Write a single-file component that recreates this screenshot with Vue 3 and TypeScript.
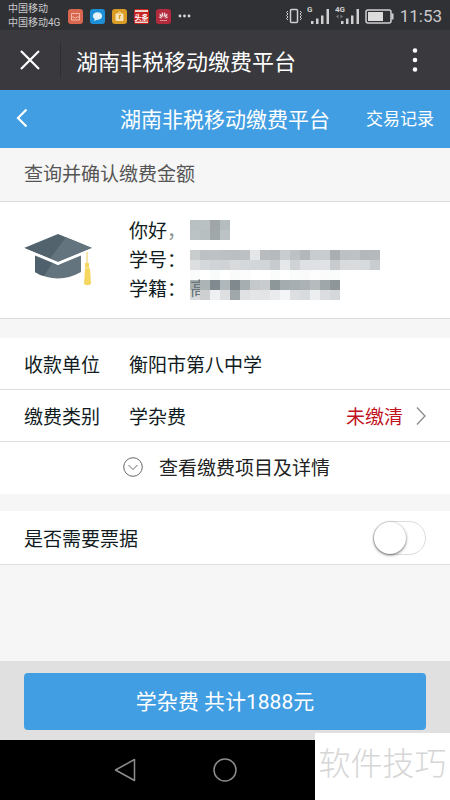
<script setup lang="ts">
import { ref } from 'vue'

interface Cell {
  x: number
  y: number
  fill: string
}

const needReceipt = ref(false)

// Privacy mosaic: one string of grey levels per line of 10px blocks.
const mosaicRows: { y: number; levels: string[] }[] = [
  { y: 0, levels: ['b9c0c2', 'bac1c3', 'a0a6a8', 'b6bdbf'] },
  { y: 10, levels: ['bcc3c5', 'b8bfc1', 'a0a8aa', 'bdc3c4'] },
  { y: 30, levels: ['c8cccd', 'bdc1c3', 'bec2c4', 'bcc0c2', 'bbbfc1', 'bdc1c3', 'e4e6e8', 'b8bcbe', 'b6babc', 'c9cdcf', 'bdc1c3', 'b3b7ba', 'c8ccce', 'c8ccce', 'a9aeb1', 'bdc1c3', 'bec2c4', 'b4b8ba', 'b5b9bb'] },
  { y: 40, levels: ['dcdee0', 'd5d8da', 'd1d4d6', 'd0d3d5', 'd8dadc', 'd5d8da', 'd3d6d8', 'd2d5d7', 'c7cbcd', 'e5e7e9', 'd0d3d5', 'dee0e3', 'dee0e3', 'e0e2e5', 'c7cbcd', 'd8dadc', 'd9dbdd', 'd7dadc', 'c9cdcf'] },
  { y: 50, levels: ['fafbfb', 'ffffff', 'f9fafa', 'ffffff', 'f9fafa', 'fcfcfc', 'ffffff', 'ffffff', 'fafbfb', 'ffffff', 'fafbfb', 'fafafb', 'fdfdfd', 'fbfbfb', 'fafbfb'] },
  { y: 60, levels: ['a9b0b2', 'adb4b6', '818a8f', 'b1b8bb', '7f898e', 'a7aeb1', 'c5c9cb', 'c8ccce', '8d9699', 'a5acaf', 'a7aeb1', 'abb1b4', 'b6bbbd', 'a0a7aa', '8e969a'] },
  { y: 70, levels: ['d8dadb', 'cdcfd1', 'eff0f1', 'dddfe1', 'a0a7aa', 'dfe1e3', 'e3e5e6', 'e2e4e5', 'eaebec', 'f4f5f6', 'dcdee0', 'd8dbdd', 'edeef0', 'dbdde0', 'd5d8da'] },
]

const cells: Cell[] = mosaicRows.flatMap((row) =>
  row.levels.map((level, i) => ({ x: i * 10, y: row.y, fill: `#${level}` })),
)
</script>

<template>
  <div class="screen">
    <div class="status">
      <div class="carriers">
        <span>中国移动</span>
        <span>中国移动4G</span>
      </div>
      <div class="apps">
        <svg class="app" viewBox="0 0 15 15" aria-hidden="true">
          <rect width="15" height="15" rx="3" fill="#d9674f" />
          <path d="M3.5 4.5h8v6.500h-8zM3.500 8h2.200q1.800 2.200 3.600 0h2.200" fill="none" stroke="#f3b7a6" />
        </svg>
        <svg class="app" viewBox="0 0 15 15" aria-hidden="true">
          <rect width="15" height="15" rx="3" fill="#1d8fd6" />
          <ellipse cx="7.500" cy="7" rx="4.600" ry="3.800" fill="#e3f1fa" />
          <path d="M5 9.500l-1 2.500 4-1.500z" fill="#e3f1fa" />
        </svg>
        <svg class="app" viewBox="0 0 15 15" aria-hidden="true">
          <rect width="15" height="15" rx="3" fill="#d99c25" />
          <rect x="3.500" y="4.500" width="8" height="7.500" rx="1" fill="#f6e3b6" />
          <path d="M5.500 4.500q2-3 4 0" fill="none" stroke="#f6e3b6" />
          <path d="M7.500 6v4M7.500 6.500h1.500" stroke="#d99c25" stroke-width="1.200" />
        </svg>
        <svg class="app" viewBox="0 0 15 15" aria-hidden="true">
          <rect width="15" height="15" rx="2" fill="#c9231f" />
          <path d="M1 1h13v2H1zM1 12.500h13v1.500H1z" fill="#ecd9d3" />
          <text x="7.500" y="10.500" text-anchor="middle" class="app-text">头条</text>
        </svg>
        <svg class="app" viewBox="0 0 15 15" aria-hidden="true">
          <rect width="15" height="15" rx="3" fill="#b32b3c" />
          <path d="M7.200 8.500Q4.500 5 6.300 3q1.300 1.500.9 5.500zM7.800 8.500q2.700-3.500.9-5.500-1.300 1.500-.9 5.500zM6.500 8.800Q3 7.500 3.600 4.500 6 5.500 6.500 8.800zM8.500 8.800Q12 7.500 11.400 4.500 9 5.500 8.500 8.800zM6 9.500q-2.500.3-3.300-2 2.200 0 3.300 2zM9 9.500q2.500.3 3.300-2-2.200 0-3.300 2z" fill="#f2dfe1" />
          <path d="M4 11.500h7" stroke="#d98b94" />
        </svg>
        <svg class="more" viewBox="0 0 13 4" aria-hidden="true">
          <g fill="#d8d8da"><circle cx="2" cy="2" r="1.400" /><circle cx="6.500" cy="2" r="1.400" /><circle cx="11" cy="2" r="1.400" /></g>
        </svg>
      </div>
      <div class="signals">
        <svg width="18" height="18" viewBox="0 0 18 18" fill="none" stroke="#d0d0d2" aria-hidden="true">
          <rect x="5.500" y="2.500" width="7" height="13" rx="1" stroke-width="1.500" />
          <path d="M3 4L1.500 5.500 3 7 1.500 8.500 3 10l-1.500 1.500L3 13M15 4l1.500 1.500L15 7l1.500 1.500L15 10l1.500 1.500L15 13" />
        </svg>
        <svg width="24" height="22" viewBox="0 0 24 22" fill="#d0d0d2" aria-hidden="true">
          <text x="0" y="7" class="net">G</text>
          <path d="M4 16h2.500v3H4zM9 13.500h2.500V19H9zM14 10.500h2.500V19H14zM19.500 4H22v15h-2.500z" />
        </svg>
        <svg width="26" height="22" viewBox="0 0 26 22" fill="#d0d0d2" aria-hidden="true">
          <text x="0" y="7" class="net">4G</text>
          <path d="M1 11.500l2.500-2v4zM8 11.500l-2.500-2v4z" fill="#77787b" />
          <path d="M6 16h2.500v3H6zM11 13.500h2.500V19H11zM16 10.500h2.500V19H16zM21.500 4H24v15h-2.500z" />
        </svg>
        <svg class="battery" width="29" height="15" viewBox="0 0 29 15" aria-hidden="true">
          <rect x="1" y="1" width="25" height="13" rx="2" fill="none" stroke="#d0d0d2" stroke-width="1.500" />
          <rect x="3" y="3" width="15" height="9" fill="#dcdcdd" />
          <path d="M27.500 4.500v6" stroke="#d0d0d2" stroke-width="2" />
        </svg>
        <span class="clock">11:53</span>
      </div>
    </div>

    <div class="webbar">
      <button class="close" type="button" aria-label="关闭">
        <svg width="22" height="22" viewBox="0 0 22 22" aria-hidden="true">
          <path d="M2 2l18 18M20 2L2 20" stroke="#fff" stroke-width="2.200" />
        </svg>
      </button>
      <div class="webtitle">湖南非税移动缴费平台</div>
      <button class="menu" type="button" aria-label="更多">
        <svg width="6" height="26" viewBox="0 0 6 26" fill="#fff" aria-hidden="true">
          <circle cx="3" cy="3.500" r="2.300" /><circle cx="3" cy="13" r="2.300" /><circle cx="3" cy="22.500" r="2.300" />
        </svg>
      </button>
    </div>

    <header class="header">
      <button class="back" type="button" aria-label="返回">
        <svg width="12" height="20" viewBox="0 0 12 20" aria-hidden="true">
          <path d="M10.500 1.500L2 10l8.500 8.500" fill="none" stroke="#fff" stroke-width="2.200" />
        </svg>
      </button>
      <h1>湖南非税移动缴费平台</h1>
      <a class="records" href="#records">交易记录</a>
    </header>

    <main>
      <h2 class="section">查询并确认缴费金额</h2>

      <section class="card profile">
        <svg class="cap" width="68" height="54" viewBox="0 0 68 54" aria-hidden="true">
          <path d="M11 20v19q23 13 46 0V20L34 32z" fill="#64747e" />
          <path d="M11 20v19q4 3 9 4l9-14z" fill="#4f616c" />
          <path d="M34 1l34 14-34 14L0 15z" fill="#52636e" />
          <path d="M42 4.300L68 15 34 29l-8-3.300z" fill="#64747e" />
          <path d="M34 29L0 15v3l34 14 34-14v-3z" fill="#fff" />
          <path d="M63 19v13" stroke="#f4dc8b" stroke-width="1.500" />
          <path d="M61 30h4v5h1l1 16q-4 2.500-7 0l1-16z" fill="#f5d65f" />
          <path d="M60.500 35h5.500" stroke="#fbedb6" />
        </svg>
        <div class="labels">
          <span>你好<i>，</i></span>
          <span>学号：</span>
          <span>学籍：</span>
        </div>
        <svg class="mosaic" width="190" height="80" viewBox="0 0 190 80" shape-rendering="crispEdges" aria-hidden="true">
          <rect v-for="c in cells" :key="`${c.x}-${c.y}`" :x="c.x" :y="c.y" width="10" height="10" :fill="c.fill" />
          <svg width="10" height="80">
            <text x="0" y="76" class="veiled">高</text>
          </svg>
        </svg>
      </section>

      <section class="card rows">
        <div class="row">
          <span class="name">收款单位</span>
          <span class="value">衡阳市第八中学</span>
        </div>
        <a class="row" href="#category">
          <span class="name">缴费类别</span>
          <span class="value">学杂费</span>
          <span class="unpaid">未缴清</span>
          <svg width="10" height="20" viewBox="0 0 10 20" aria-hidden="true">
            <path d="M1 1.500L9 10l-8 8.500" fill="none" stroke="#8b8b8b" stroke-width="1.300" />
          </svg>
        </a>
        <button class="row details" type="button">
          <svg width="20" height="20" viewBox="0 0 20 20" fill="none" stroke="#666" aria-hidden="true">
            <circle cx="10" cy="10" r="9.300" /><path d="M5.500 8l4.500 4.500L14.500 8" />
          </svg>
          <span>查看缴费项目及详情</span>
        </button>
      </section>

      <section class="card receipt">
        <label for="receipt">是否需要票据</label>
        <input id="receipt" v-model="needReceipt" class="switch" type="checkbox" role="switch" />
      </section>
    </main>

    <footer class="pay">
      <button type="button">学杂费 共计1888元</button>
    </footer>

    <nav class="keys">
      <button type="button" aria-label="后退">
        <svg width="24" height="24" viewBox="0 0 24 24" fill="none" stroke="#8c8c8c" stroke-width="1.500" stroke-linejoin="round" aria-hidden="true">
          <path d="M21.500 1.500v21L2.500 12z" />
        </svg>
      </button>
      <button type="button" aria-label="主屏幕">
        <svg width="24" height="24" viewBox="0 0 24 24" fill="none" stroke="#8c8c8c" stroke-width="1.500" aria-hidden="true">
          <circle cx="12" cy="12" r="11" />
        </svg>
      </button>
      <span></span>
    </nav>
    <div class="watermark">软件技巧</div>
  </div>
</template>

<style>
body {
  margin: 0;
}
</style>

<style scoped>
.screen {
  position: relative;
  display: flex;
  flex-direction: column;
  min-height: 100vh;
  background: #f6f6f6;
  color: #111c22;
  font-family: Roboto, "Noto Sans CJK SC", sans-serif;
  font-size: 19px;
}
.screen * {
  box-sizing: border-box;
}
button {
  border: 0;
  padding: 0;
  background: none;
  color: inherit;
  font: inherit;
}
a {
  color: inherit;
  text-decoration: none;
}
svg {
  display: block;
  flex: none;
}
.status {
  display: flex;
  align-items: center;
  height: 30px;
  padding: 2px 8px 0;
  background: #303135;
  color: #c9c9cb;
}
.carriers {
  display: flex;
  flex-direction: column;
  width: 60px;
  font-size: 10px;
  line-height: 14px;
}
.apps {
  display: flex;
  align-items: center;
  gap: 7px;
}
.app {
  width: 15px;
  height: 15px;
}
.app-text {
  fill: #fff;
  font-size: 7px;
  font-weight: 700;
}
.more {
  width: 13px;
  height: 4px;
}
.signals {
  display: flex;
  align-items: center;
  gap: 4px;
  margin-left: auto;
}
.net {
  font-size: 8px;
  font-weight: 700;
}
.clock {
  margin-left: 2px;
  font-size: 17px;
  line-height: 20px;
}
.webbar {
  display: flex;
  align-items: center;
  height: 60px;
  background: #39393e;
  color: #fff;
}
.close {
  display: grid;
  place-items: center;
  width: 61px;
  height: 36px;
  border-right: 1px solid #2f2f33;
}
.webtitle {
  flex: 1;
  padding-left: 15px;
  font-size: 22px;
}
.menu {
  padding: 0 32px;
}
.header {
  display: grid;
  grid-template-columns: 1fr auto 1fr;
  align-items: center;
  height: 58px;
  padding: 0 16px 3px;
  background: #429ee2;
  color: #fff;
}
.header h1 {
  margin: 0;
  font-size: 21px;
  font-weight: 400;
}
.back {
  justify-self: start;
}
.records {
  justify-self: end;
  font-size: 17px;
}
main {
  flex: 1;
}
.section {
  margin: 0;
  padding: 1px 24px 0;
  color: #555;
  font-size: 19px;
  font-weight: 400;
  line-height: 52px;
}
.card {
  border-bottom: 1px solid #dedede;
  background: #fff;
}
.profile {
  display: flex;
  align-items: center;
  height: 118px;
  padding: 0 24px;
  border-top: 1px solid #dedede;
}
.labels {
  display: flex;
  flex-direction: column;
  width: 61px;
  margin-left: 37px;
  line-height: 29px;
}
.labels i {
  color: #8b9194;
  font-style: normal;
}
.veiled {
  fill: #68767d;
  font-size: 19px;
}
.rows {
  margin-top: 19px;
  border-bottom: 0;
}
.row {
  display: flex;
  align-items: center;
  width: 100%;
  height: 52px;
  padding: 0 24px;
  border-bottom: 1px solid #dedede;
}
.name {
  width: 105px;
}
.value {
  flex: 1;
}
.unpaid {
  margin-right: 13px;
  color: #c1121f;
}
.details {
  justify-content: center;
  gap: 16px;
  padding: 0 24px 3px 27px;
  border-bottom: 0;
  color: #222;
}
.receipt {
  display: flex;
  align-items: center;
  justify-content: space-between;
  height: 54px;
  margin-top: 17px;
  padding: 0 24px;
}
.switch {
  width: 53px;
  height: 34px;
  margin: 0;
  border: 1px solid #dcdcdc;
  border-radius: 17px;
  background: #fff;
  appearance: none;
}
.switch::before {
  display: block;
  width: 32px;
  height: 32px;
  border-radius: 50%;
  background: #fff;
  box-shadow: 0 1px 3px rgba(0, 0, 0, 0.6);
  content: "";
}
.switch:checked {
  background: #429ee2;
}
.switch:checked::before {
  margin-left: auto;
}
.pay {
  height: 79px;
  padding: 12px 24px 10px;
  background: #e0e0e0;
}
.pay button {
  width: 100%;
  height: 57px;
  padding-bottom: 3px;
  border-radius: 4px;
  background: #429ee2;
  color: #fff;
  font-size: 21px;
}
.keys {
  display: grid;
  grid-template-columns: repeat(3, 100px);
  justify-content: center;
  align-items: center;
  height: 60px;
  background: #000;
}
.keys button {
  display: grid;
  place-items: center;
}
.watermark {
  position: absolute;
  right: 0;
  bottom: 0;
  width: 135px;
  height: 67px;
  background: #fff;
  color: #d6d6d6;
  font-size: 32px;
  font-weight: 300;
  line-height: 63px;
  text-align: center;
}
</style>
